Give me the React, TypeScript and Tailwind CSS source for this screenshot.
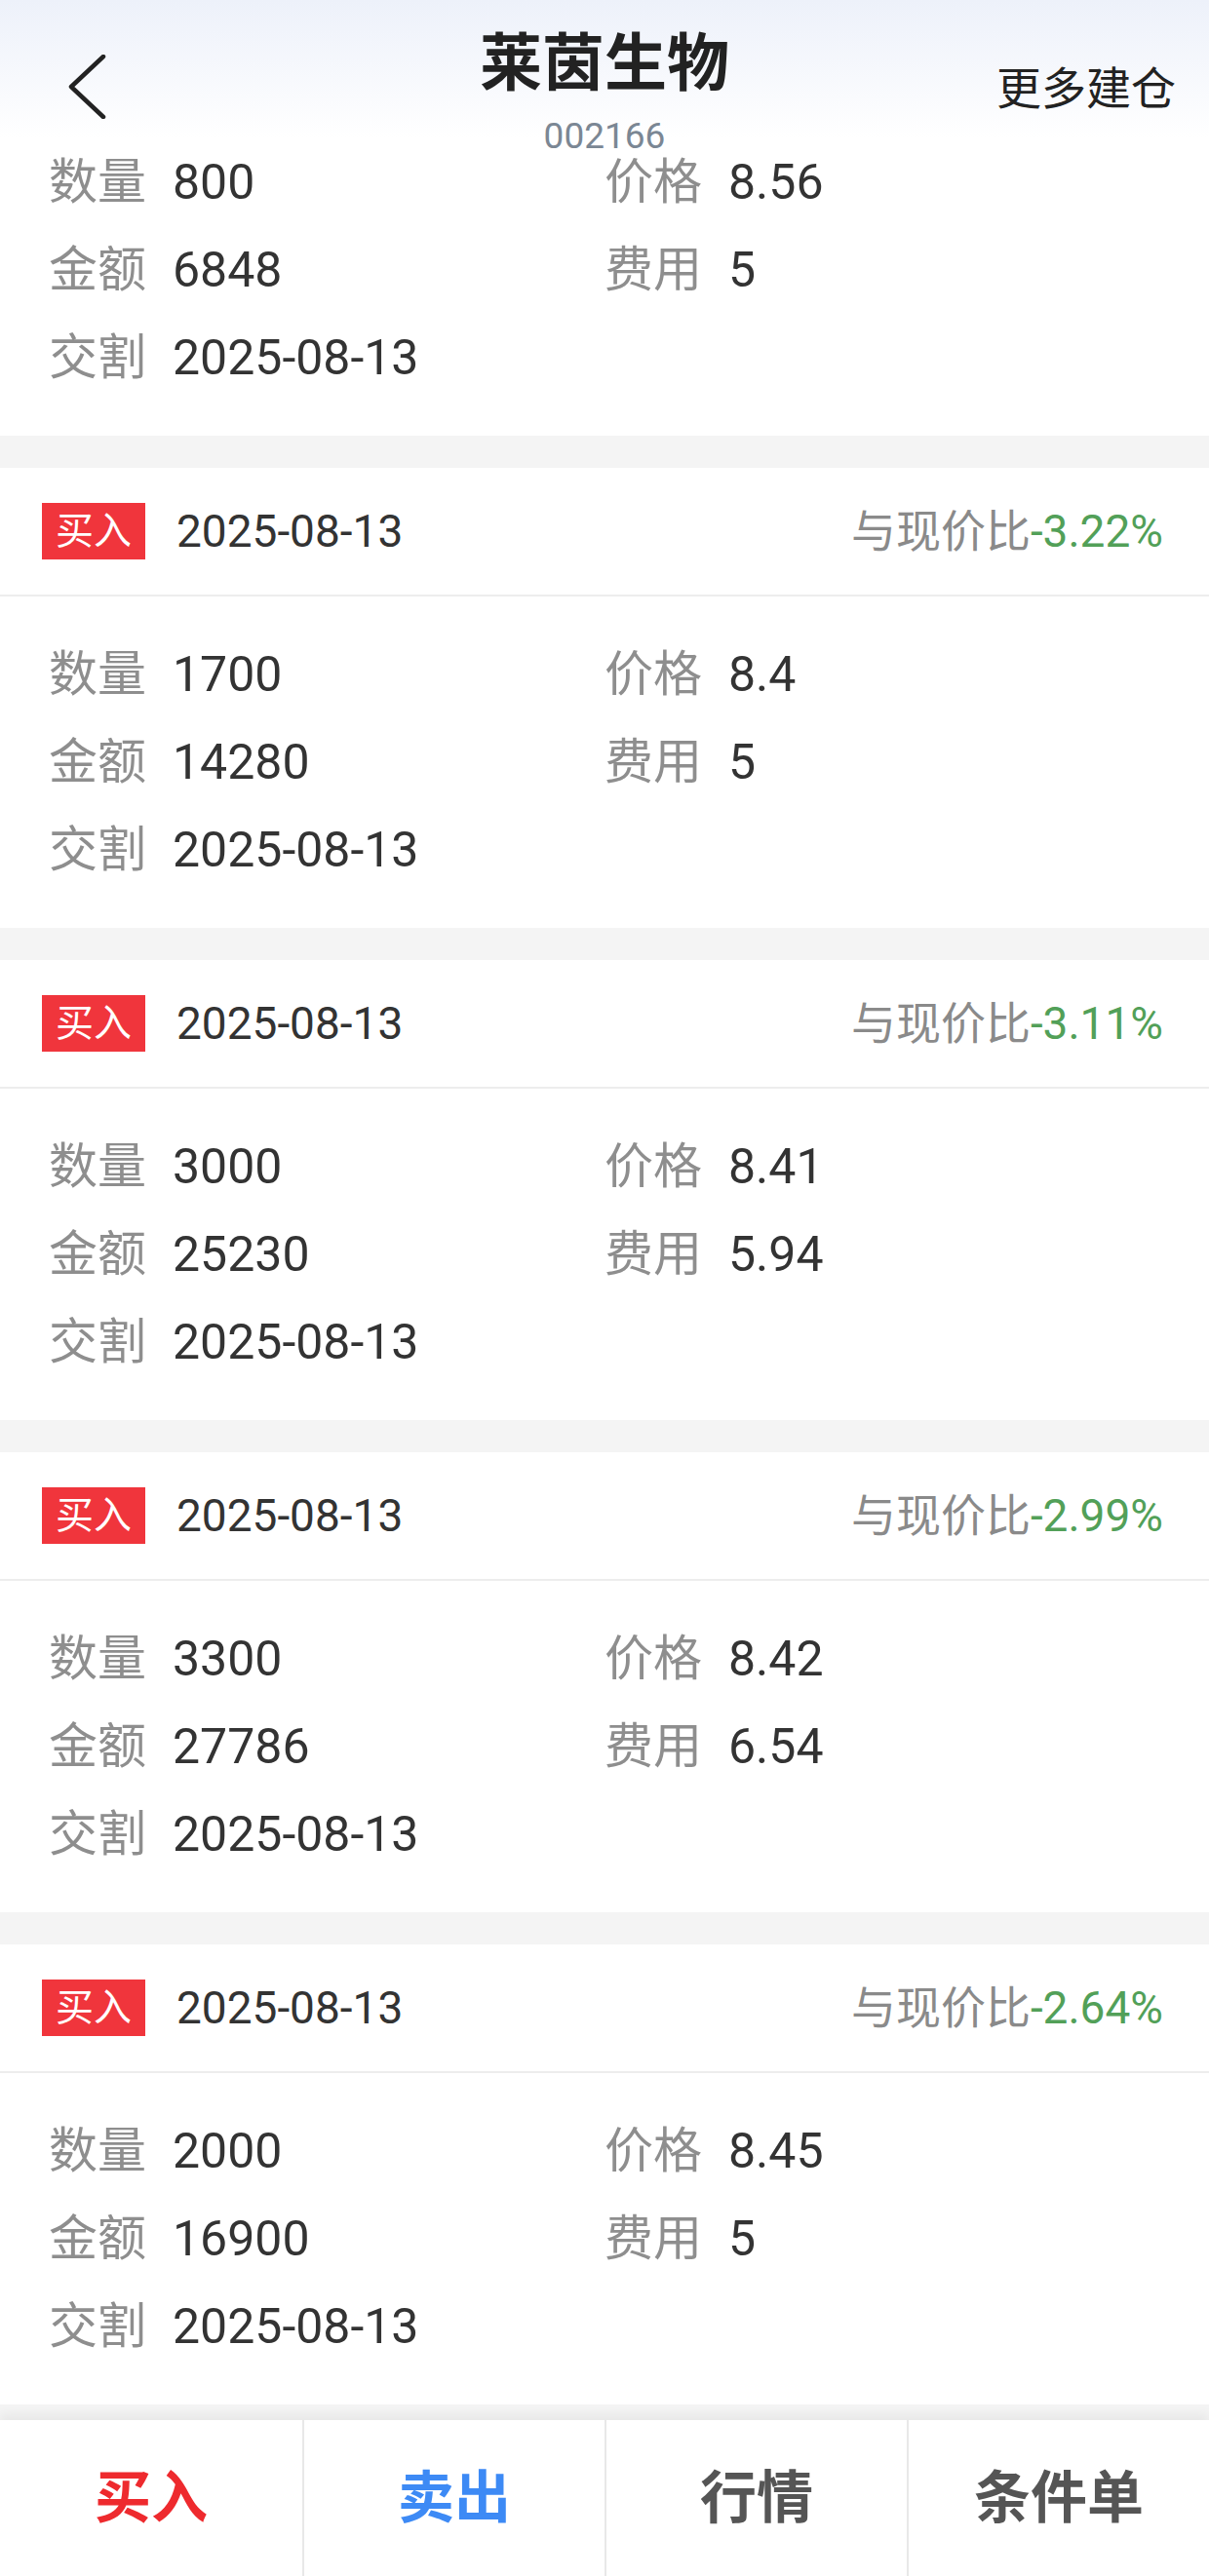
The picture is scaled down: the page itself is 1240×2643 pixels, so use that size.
import React from "react";

type Rec = { qty: string; price: string; amt: string; fee: string; date: string; pct?: string };

const recs: Rec[] = [
  { qty: "1700", price: "8.4", amt: "14280", fee: "5", date: "2025-08-13", pct: "-3.22%" },
  { qty: "3000", price: "8.41", amt: "25230", fee: "5.94", date: "2025-08-13", pct: "-3.11%" },
  { qty: "3300", price: "8.42", amt: "27786", fee: "6.54", date: "2025-08-13", pct: "-2.99%" },
  { qty: "2000", price: "8.45", amt: "16900", fee: "5", date: "2025-08-13", pct: "-2.64%" },
];

function Cell({ label, value }: { label: string; value: string }) {
  return (
    <div className="flex items-center h-[90px] text-[50px] leading-none">
      <span className="text-[#8e8e8e] mr-[27px]">{label}</span>
      <span className="text-[#333333]">{value}</span>
    </div>
  );
}

function Body({ r, first }: { r: Rec; first?: boolean }) {
  return (
    <div className={first ? "bg-white px-[50px] pb-[35px]" : "bg-white px-[50px] pt-[35px] pb-[35px]"}>
      <div className="grid grid-cols-2">
        <Cell label="数量" value={r.qty} />
        <Cell label="价格" value={r.price} />
        <Cell label="金额" value={r.amt} />
        <Cell label="费用" value={r.fee} />
        <Cell label="交割" value={r.date} />
      </div>
    </div>
  );
}

function Card({ r }: { r: Rec }) {
  return (
    <div className="bg-white mt-[33px]">
      <div className="h-[132px] border-b-2 border-[#ededed] flex items-center pl-[43px] pr-[47px]">
        <div className="w-[106px] h-[58px] bg-[#f0353c] text-white text-[39px] leading-none flex items-center justify-center">
          买入
        </div>
        <div className="ml-[32px] text-[46px] leading-none text-[#333333]">{r.date}</div>
        <div className="ml-auto text-[46px] leading-none text-[#8a8a8a]">
          与现价比<span className="text-[#52a058]">{r.pct}</span>
        </div>
      </div>
      <Body r={r} />
    </div>
  );
}

export default function App() {
  return (
    <div
      className="w-[1240px] h-[2643px] bg-[#f4f4f4] flex flex-col overflow-hidden"
      style={{ fontFamily: 'Roboto, "Noto Sans CJK SC", "Noto Sans", sans-serif' }}
    >
      <div className="h-[142px] shrink-0 bg-gradient-to-b from-[#edf1fa] to-white grid grid-cols-[1fr_auto_1fr] relative z-10">
        <div className="pl-[70px] pt-[56px]">
          <svg width="40" height="66" viewBox="0 0 40 66" fill="none">
            <path d="M36 2 L3 33 L36 64" stroke="#222222" strokeWidth="4.5" strokeLinecap="round" strokeLinejoin="round" />
          </svg>
        </div>
        <div className="flex flex-col items-center pt-[34px]">
          <div className="text-[64px] leading-[64px] font-bold text-[#222222]">莱茵生物</div>
          <div className="text-[37px] leading-[40px] text-[#7b8794] mt-[22px]">002166</div>
        </div>
        <div className="flex justify-end pr-[34px] pt-[66px]">
          <div className="text-[46px] leading-[50px] text-[#222222]">更多建仓</div>
        </div>
      </div>

      <Body r={{ qty: "800", price: "8.56", amt: "6848", fee: "5", date: "2025-08-13" }} first />

      {recs.map((r, i) => (
        <Card key={i} r={r} />
      ))}

      <div className="flex-1" />
      <div className="h-[160px] shrink-0 bg-white grid grid-cols-4 shadow-[0_-6px_10px_rgba(0,0,0,0.05)]">
        <div className="flex items-center justify-center text-[58px] font-bold text-[#ee2a2e]">买入</div>
        <div className="flex items-center justify-center text-[58px] font-bold text-[#3d8af5] border-l-2 border-[#e8e8e8]">卖出</div>
        <div className="flex items-center justify-center text-[58px] font-bold text-[#555555] border-l-2 border-[#e8e8e8]">行情</div>
        <div className="flex items-center justify-center text-[58px] font-bold text-[#555555] border-l-2 border-[#e8e8e8]">条件单</div>
      </div>
    </div>
  );
}
